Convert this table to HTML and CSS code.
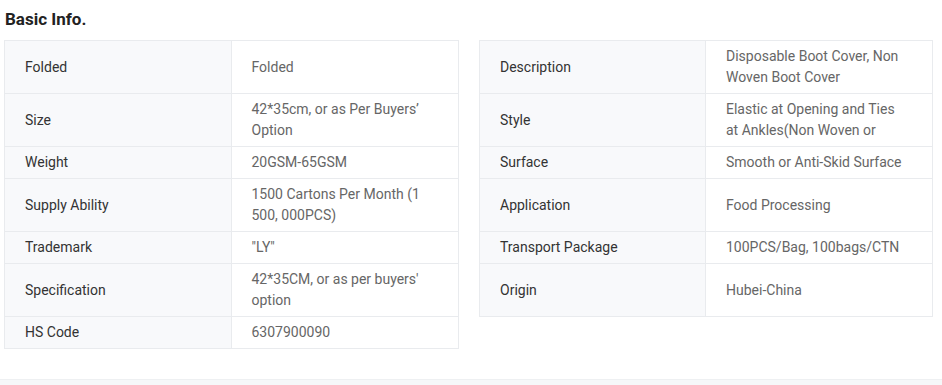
FILE: index.html
```html
<!DOCTYPE html>
<html>
<head>
<meta charset="utf-8">
<link rel="stylesheet" href="styles.css">
</head>
<body>
<div class="page">
  <h2 class="title">Basic Info.</h2>
  <div class="grid">
    <div class="item first"><div class="label">Folded</div><div class="value">Folded</div></div>
    <div class="item first"><div class="label">Description</div><div class="value">Disposable Boot Cover, Non Woven Boot Cover</div></div>
    <div class="item"><div class="label">Size</div><div class="value">42*35cm, or as Per Buyers’ Option</div></div>
    <div class="item"><div class="label">Style</div><div class="value">Elastic at Opening and Ties at Ankles(Non Woven or</div></div>
    <div class="item"><div class="label">Weight</div><div class="value">20GSM-65GSM</div></div>
    <div class="item"><div class="label">Surface</div><div class="value">Smooth or Anti-Skid Surface</div></div>
    <div class="item"><div class="label">Supply Ability</div><div class="value">1500 Cartons Per Month (1 500, 000PCS)</div></div>
    <div class="item"><div class="label">Application</div><div class="value">Food Processing</div></div>
    <div class="item"><div class="label">Trademark</div><div class="value">"LY"</div></div>
    <div class="item"><div class="label">Transport Package</div><div class="value">100PCS/Bag, 100bags/CTN</div></div>
    <div class="item"><div class="label">Specification</div><div class="value">42*35CM, or as per buyers' option</div></div>
    <div class="item"><div class="label">Origin</div><div class="value">Hubei-China</div></div>
    <div class="item"><div class="label">HS Code</div><div class="value">6307900090</div></div>
  </div>
</div>
<div class="footer-band"></div>
</body>
</html>
```
FILE: styles.css
```css
html, body {
  margin: 0;
  padding: 0;
  background: #fff;
}
body {
  font-family: Roboto, "Liberation Sans", Arial, sans-serif;
  font-size: 14px;
  color: #333;
}
.page {
  padding: 7px 0 0 4px;
}
.title {
  margin: 0 0 9px 1px;
  font-size: 17px;
  line-height: 24px;
  font-weight: 700;
  color: #222;
}
.grid {
  display: grid;
  grid-template-columns: 455px 454px;
  column-gap: 20px;
  align-items: stretch;
  align-content: start;
}
.item {
  display: flex;
  border: 1px solid #e9ebee;
  border-top: none;
}
.item.first {
  border-top: 1px solid #e9ebee;
}
.label, .value {
  display: flex;
  align-items: center;
  padding: 5px 20px;
  line-height: 21px;
  box-sizing: border-box;
}
.label {
  width: 50%;
  background: #f8f9fb;
  border-right: 1px solid #e9ebee;
  color: #333;
}
.value {
  width: 50%;
  padding-right: 24px;
  color: #666;
  background: #fff;
}
.footer-band {
  margin-top: 30px;
  height: 20px;
  background: #f6f7f9;
  border-top: 1px solid #eef0f2;
}
```
